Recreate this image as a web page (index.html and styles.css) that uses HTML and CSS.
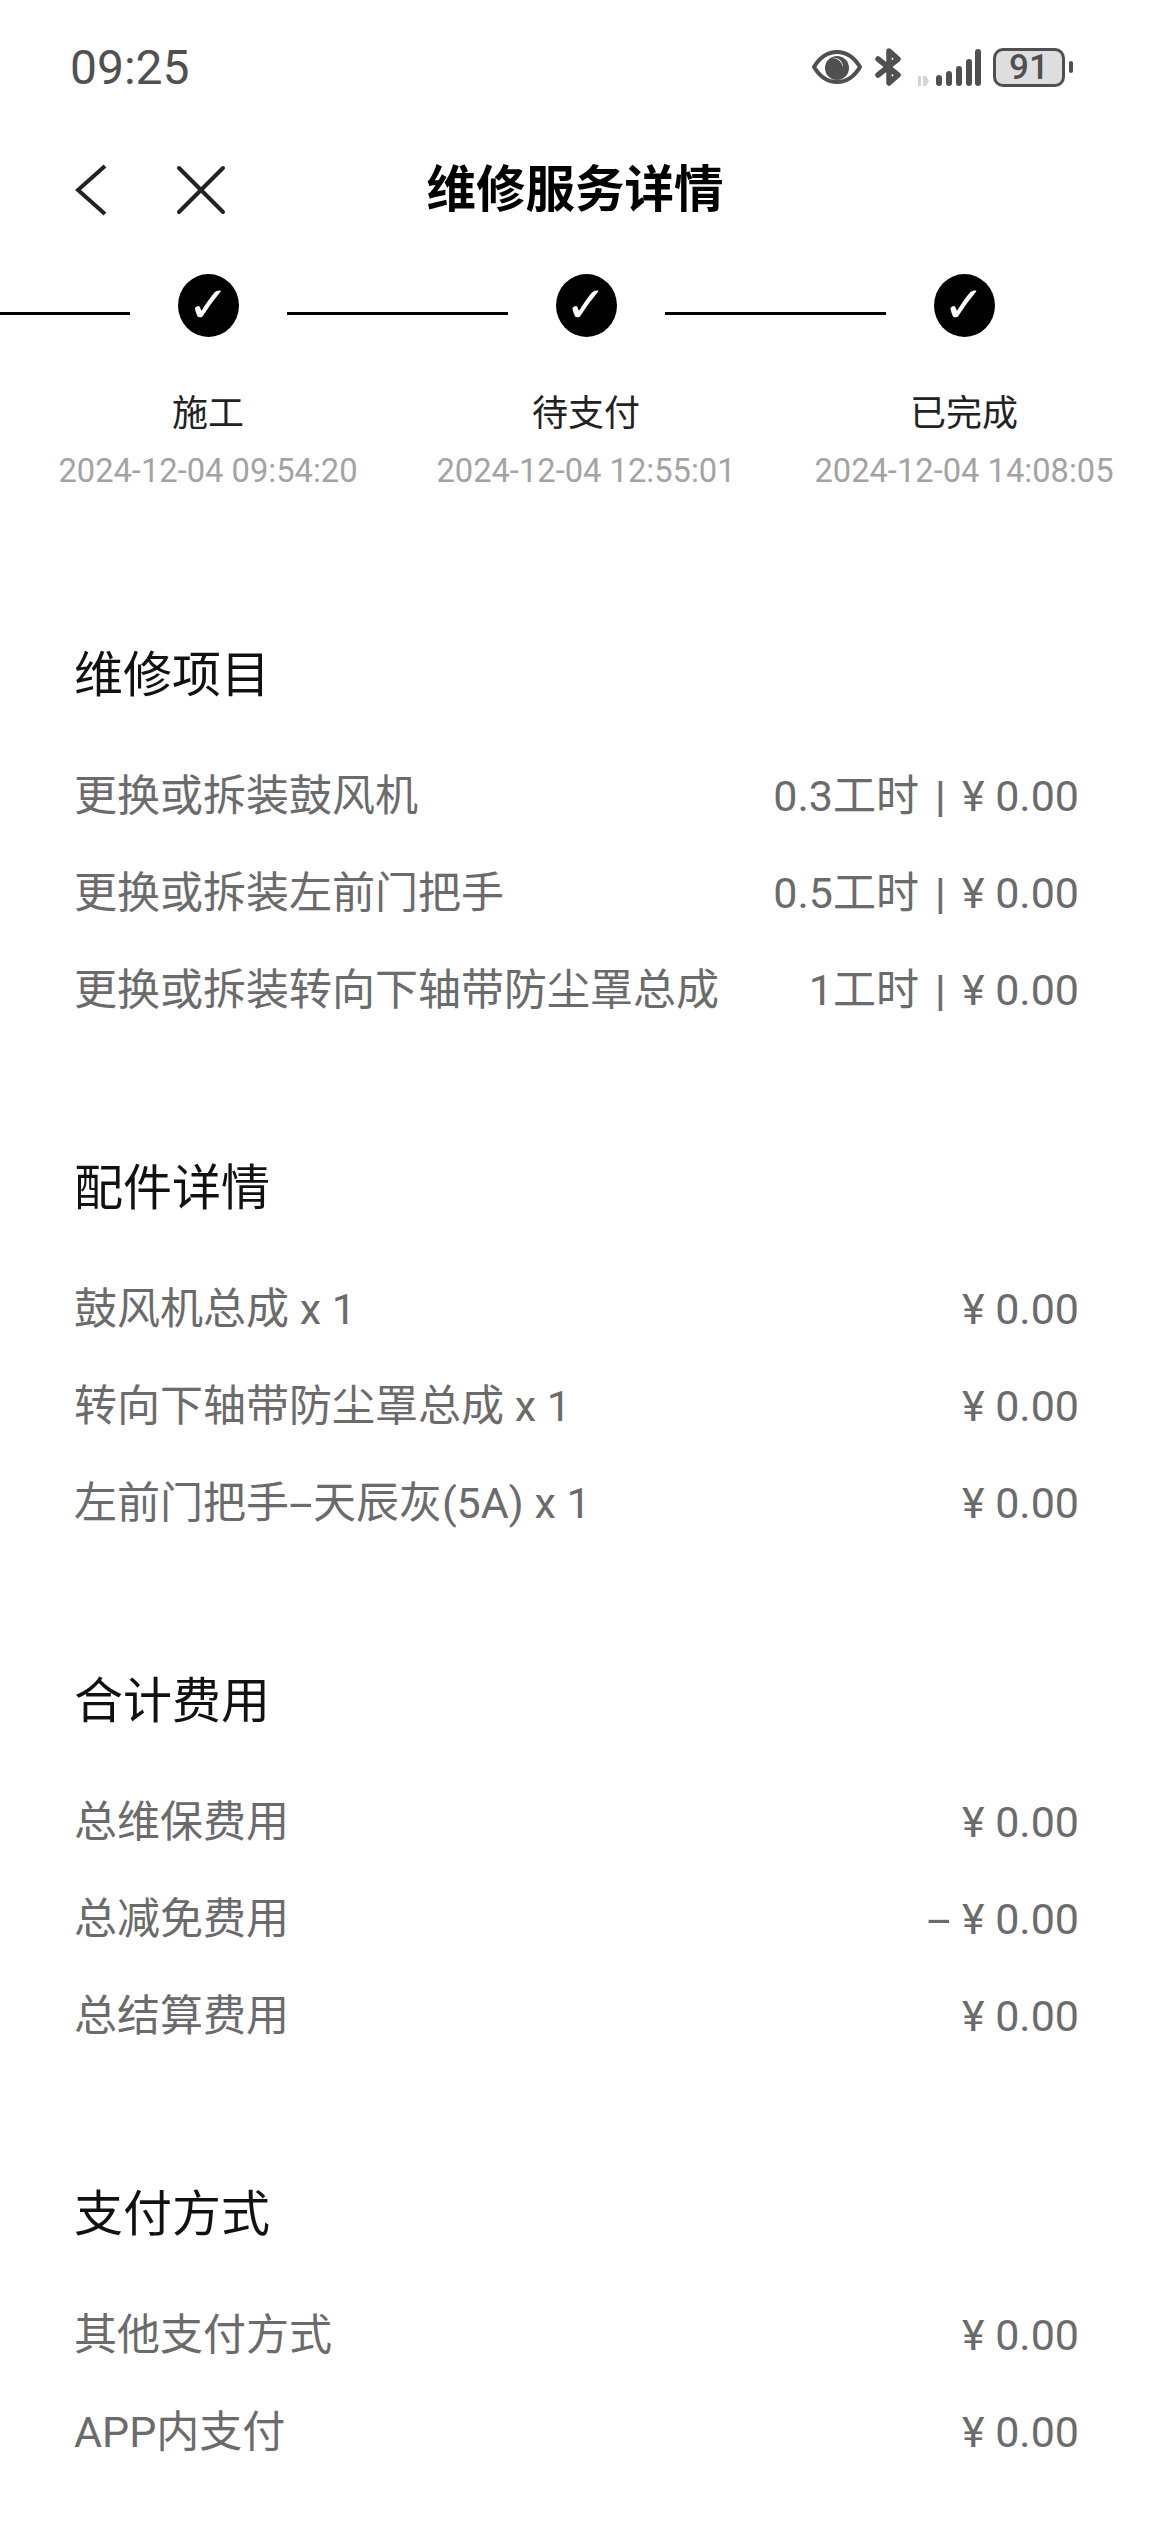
FILE: index.html
```html
<!DOCTYPE html>
<html lang="zh-CN">
<head>
  <meta charset="UTF-8">
  <meta name="viewport" content="width=device-width, initial-scale=1.0">
  <title>维修服务详情</title>
  <link rel="stylesheet" href="styles.css">
</head>
<body>
  <!-- Status bar -->
  <div class="status-bar">
    <span class="clock">09:25</span>
    <div class="status-icons">
      <svg class="icon-eye" width="50" height="34" viewBox="0 0 50 34">
        <path d="M2 17C8 7 16 2 25 2s17 5 23 15c-6 10-14 15-23 15S8 27 2 17z" fill="none" stroke="#505050" stroke-width="4" stroke-linejoin="round"/>
        <circle cx="25" cy="18" r="12" fill="#505050"/>
        <path d="M20 8a11 11 0 0 1 11 9a9 9 0 0 0-11-9z" fill="#fff"/>
      </svg>
      <svg class="icon-bt" width="27" height="38" viewBox="0 0 27 38">
        <path d="M3 11l20 16-9 8V3l9 8L3 27" fill="none" stroke="#505050" stroke-width="5.5" stroke-linecap="round" stroke-linejoin="round"/>
      </svg>
      <svg class="icon-signal" width="66" height="38" viewBox="0 0 66 38">
        <path d="M3 28h3v10H3zM8 28h3l3 5-3 5H8z" fill="#d4d4d4"/>
        <rect x="21" y="27" width="6" height="11" rx="3" fill="#505050"/>
        <rect x="31" y="23" width="6" height="15" rx="3" fill="#505050"/>
        <rect x="41" y="18" width="6" height="20" rx="3" fill="#505050"/>
        <rect x="51" y="11" width="6" height="27" rx="3" fill="#505050"/>
        <rect x="60" y="1" width="6" height="37" rx="3" fill="#505050"/>
      </svg>
      <div class="battery">
        <div class="battery-body">91</div>
        <div class="battery-tip"></div>
      </div>
    </div>
  </div>

  <!-- Title bar -->
  <div class="nav-bar">
    <svg class="nav-back" width="34" height="52" viewBox="0 0 34 52">
      <path d="M31 2L4 26l27 24" fill="none" stroke="#222" stroke-width="4"/>
    </svg>
    <svg class="nav-close" width="50" height="50" viewBox="0 0 50 50">
      <path d="M3 3l44 44M47 3L3 47" fill="none" stroke="#222" stroke-width="4" stroke-linecap="round"/>
    </svg>
    <h1>维修服务详情</h1>
  </div>

  <!-- Progress -->
  <div class="steps">
    <div class="step">
      <div class="step-track"><span class="line"></span><span class="dot">✓</span><span class="line"></span></div>
      <div class="step-name">施工</div>
      <div class="step-time">2024-12-04 09:54:20</div>
    </div>
    <div class="step">
      <div class="step-track"><span class="line"></span><span class="dot">✓</span><span class="line"></span></div>
      <div class="step-name">待支付</div>
      <div class="step-time">2024-12-04 12:55:01</div>
    </div>
    <div class="step">
      <div class="step-track"><span class="line"></span><span class="dot">✓</span><span class="line hidden"></span></div>
      <div class="step-name">已完成</div>
      <div class="step-time">2024-12-04 14:08:05</div>
    </div>
  </div>

  <div class="section first">
    <h2>维修项目</h2>
    <div class="row"><span>更换或拆装鼓风机</span><span>0.3工时<span class="sep">|</span>¥ 0.00</span></div>
    <div class="row"><span>更换或拆装左前门把手</span><span>0.5工时<span class="sep">|</span>¥ 0.00</span></div>
    <div class="row"><span>更换或拆装转向下轴带防尘罩总成</span><span>1工时<span class="sep">|</span>¥ 0.00</span></div>
  </div>

  <div class="section">
    <h2>配件详情</h2>
    <div class="row"><span>鼓风机总成 x 1</span><span>¥ 0.00</span></div>
    <div class="row"><span>转向下轴带防尘罩总成 x 1</span><span>¥ 0.00</span></div>
    <div class="row"><span>左前门把手<span class="dash">-</span>天辰灰(5A) x 1</span><span>¥ 0.00</span></div>
  </div>

  <div class="section">
    <h2>合计费用</h2>
    <div class="row"><span>总维保费用</span><span>¥ 0.00</span></div>
    <div class="row"><span>总减免费用</span><span><span class="dash">-</span> ¥ 0.00</span></div>
    <div class="row"><span>总结算费用</span><span>¥ 0.00</span></div>
  </div>

  <div class="section">
    <h2>支付方式</h2>
    <div class="row"><span>其他支付方式</span><span>¥ 0.00</span></div>
    <div class="row"><span>APP内支付</span><span>¥ 0.00</span></div>
  </div>
</body>
</html>
```

FILE: styles.css
```css
body {
  font-family: Roboto, "Noto Sans CJK SC", sans-serif;
  margin: 0;
  padding: 0;
  background-color: #fff;
  color: #222;
  overflow-x: hidden;
}

.status-bar {
  display: flex;
  justify-content: space-between;
  align-items: center;
  height: 134px;
  padding: 0 77px 0 70px;
}

.clock {
  font-size: 48px;
  color: #505050;
}

.status-icons {
  display: flex;
  align-items: center;
  gap: 13px;
}

.battery {
  display: flex;
  align-items: center;
  gap: 4px;
  margin-left: -1px;
}

.battery-body {
  width: 72px;
  height: 39px;
  box-sizing: border-box;
  border: 3px solid #505050;
  border-radius: 10px;
  background-color: #dedede;
  color: #505050;
  font-size: 35px;
  font-weight: 500;
  line-height: 33px;
  text-align: center;
}

.battery-tip {
  width: 4px;
  height: 12px;
  border-radius: 2px;
  background-color: #505050;
}

.nav-bar {
  position: relative;
  display: flex;
  align-items: center;
  height: 100px;
  padding-top: 6px;
  padding-left: 74px;
  gap: 68px;
}

.nav-bar h1 {
  position: absolute;
  left: 0;
  right: 0;
  margin: -9px 0 0;
  font-size: 49.5px;
  font-weight: bold;
  color: #000;
  text-align: center;
}

.steps {
  display: grid;
  grid-template-columns: 397px repeat(2, 378px);
  margin-top: 34px;
}

.step {
  display: flex;
  flex-direction: column;
  align-items: center;
}

.step:first-child {
  padding-left: 19px;
}

.step:first-child .step-track {
  margin-left: -19px;
}

.step:first-child .line:first-child {
  flex: none;
  width: 130px;
}

.step-track {
  display: flex;
  align-items: center;
  align-self: stretch;
  gap: 48px;
  margin-bottom: 53px;
}

.line {
  flex: 1;
  height: 3px;
  margin-top: 16px;
  background-color: #000;
}

.line.hidden {
  visibility: hidden;
}

.dot {
  width: 61px;
  height: 63px;
  border-radius: 50%;
  background-color: #000;
  color: #fff;
  font-family: "DejaVu Sans", sans-serif;
  font-size: 50px;
  line-height: 63px;
  text-align: center;
}

.step-name {
  font-size: 36px;
  line-height: 48px;
  color: #222;
}

.step-time {
  margin-top: 13px;
  font-size: 32.7px;
  line-height: 40px;
  color: #a3a3a3;
  white-space: nowrap;
}

.section {
  padding: 0 71px 0 74px;
  margin-top: 114px;
}

.section.first {
  margin-top: 149px;
}

h2 {
  margin: 0 0 36px;
  font-size: 49px;
  line-height: 72px;
  font-weight: normal;
  color: #111;
}

.row {
  display: flex;
  justify-content: space-between;
  height: 97px;
  line-height: 97px;
  font-size: 43px;
  color: #6b6b6b;
}

.sep {
  display: inline-block;
  width: 43px;
  font-weight: 500;
  text-align: center;
}

.dash {
  display: inline-block;
  margin: 0 6px;
  transform: scaleX(2);
}
```
